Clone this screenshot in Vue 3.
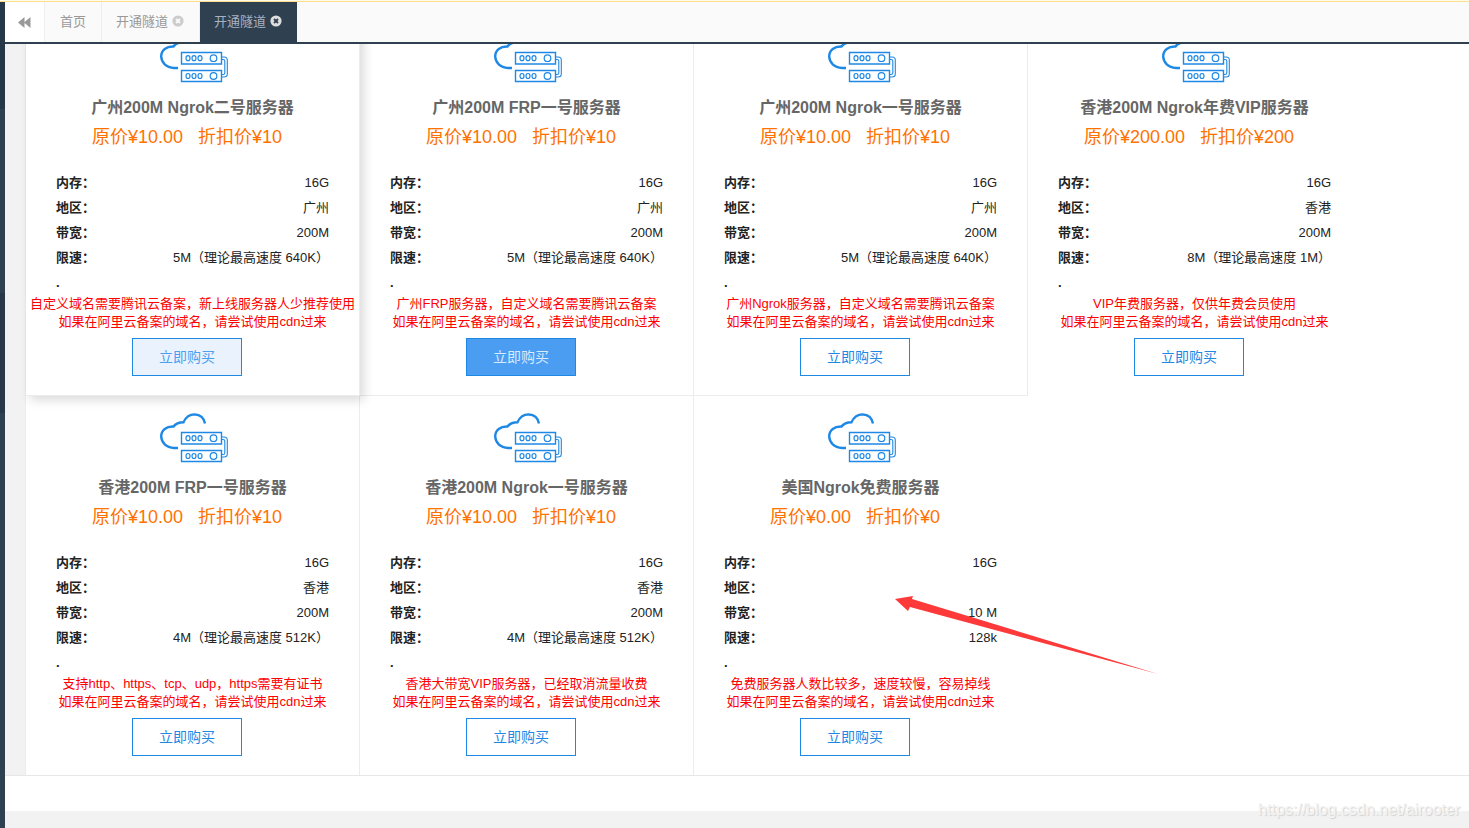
<script setup>
const specLabels = ['内存', '地区', '带宽', '限速']
const sharedNote = '如果在阿里云备案的域名，请尝试使用cdn过来'
const servers = [
  { name: '广州200M Ngrok二号服务器', price: '10.00', sale: '10', specs: ['16G', '广州', '200M', '5M（理论最高速度 640K）'], note: '自定义域名需要腾讯云备案，新上线服务器人少推荐使用', state: 'raised' },
  { name: '广州200M FRP一号服务器', price: '10.00', sale: '10', specs: ['16G', '广州', '200M', '5M（理论最高速度 640K）'], note: '广州FRP服务器，自定义域名需要腾讯云备案', state: 'pressed' },
  { name: '广州200M Ngrok一号服务器', price: '10.00', sale: '10', specs: ['16G', '广州', '200M', '5M（理论最高速度 640K）'], note: '广州Ngrok服务器，自定义域名需要腾讯云备案' },
  { name: '香港200M Ngrok年费VIP服务器', price: '200.00', sale: '200', specs: ['16G', '香港', '200M', '8M（理论最高速度 1M）'], note: 'VIP年费服务器，仅供年费会员使用', state: 'plain' },
  { name: '香港200M FRP一号服务器', price: '10.00', sale: '10', specs: ['16G', '香港', '200M', '4M（理论最高速度 512K）'], note: '支持http、https、tcp、udp，https需要有证书' },
  { name: '香港200M Ngrok一号服务器', price: '10.00', sale: '10', specs: ['16G', '香港', '200M', '4M（理论最高速度 512K）'], note: '香港大带宽VIP服务器，已经取消流量收费' },
  { name: '美国Ngrok免费服务器', price: '0.00', sale: '0', specs: ['16G', '', '10 M', '128k'], note: '免费服务器人数比较多，速度较慢，容易掉线', state: 'last' }
]
</script>

<template>
  <div class="app">
    <div class="notice"></div>
    <div class="shell">
      <aside class="side"></aside>
      <main class="main">
        <nav class="tabs">
          <button class="back" type="button" aria-label="向左滚动">
            <svg width="13" height="11" viewBox="0 0 13 11"><path d="M6.5 0v11L0 5.500zM12.500 0v11L6 5.500z" fill="#999" /></svg>
          </button>
          <a class="tab home" href="#home">首页</a>
          <a v-for="n in 2" :key="n" class="tab" :class="{ active: n === 2 }" :href="'#tunnel' + n">
            开通隧道
            <svg class="close" width="12" height="12" viewBox="0 0 12 12">
              <circle cx="6" cy="6" r="5.600" fill="currentColor" />
              <path class="cross" d="M4 4l4 4M8 4l-4 4" stroke-width="1.800" />
            </svg>
          </a>
        </nav>
        <div class="view">
          <section class="cards">
            <article v-for="s in servers" :key="s.name" class="card" :class="s.state">
              <svg class="cloud" width="71" height="50" viewBox="0 0 71 50" fill="none" stroke="#1e88e5">
                <path d="M21 35H17C9 34.500 4.500 29.500 4.200 23.500C4.200 17 9.500 13.200 16.500 13.500C19 10 22 9.200 26.500 9.200C29 4 33.500 1.400 37.500 1.400C43 1.700 47 5 48 10.500" stroke-width="2.400" />
                <path d="M24.500 19.500H64.500V31H24.500zM24.500 37.500H64.500V48.500H24.500z" stroke-width="1.400" />
                <path d="M64.500 24H67Q70.300 24 70.300 27V41Q70.300 44 67 44H64.500M64.500 26.500H66Q67.800 26.500 67.800 28V40Q67.800 41.500 66 41.500H64.500" stroke-width="1.100" />
                <g v-for="y in [25.2, 43]" :key="y" stroke-width="1.200">
                  <circle cx="56.500" :cy="y" r="3.300" />
                  <ellipse v-for="x in [31, 37, 43]" :key="x" :cx="x" :cy="y" rx="2" ry="2.500" />
                </g>
              </svg>
              <h2 class="name">{{ s.name }}</h2>
              <p class="price"><span>原价¥{{ s.price }}</span><span>折扣价¥{{ s.sale }}</span></p>
              <dl class="specs">
                <div v-for="(label, i) in specLabels" :key="label" class="spec">
                  <dt>{{ label }}：</dt>
                  <dd>{{ s.specs[i] }}</dd>
                </div>
                <div class="spec"><dt>.</dt></div>
              </dl>
              <p class="note">{{ s.note }}<br />{{ sharedNote }}</p>
              <button class="buy" type="button">立即购买</button>
            </article>
          </section>
          <div class="tail"></div>
          <svg class="arrow" width="270" height="80" viewBox="0 0 270 80">
            <path d="M5 3L23 0L22 3L268 78L20 11L18 15z" fill="#fd3a39" />
          </svg>
        </div>
      </main>
    </div>
    <div class="watermark">https://blog.csdn.net/airooter</div>
  </div>
</template>

<style>
body { margin: 0; }
</style>

<style scoped>
* { box-sizing: border-box; }
.app {
  position: relative;
  display: flex;
  flex-direction: column;
  height: 100vh;
  overflow: hidden;
  background: #f2f2f2;
  color: #222;
  font: 13px/25px "Liberation Sans", "Noto Sans CJK SC", sans-serif;
}
.notice { flex: none; height: 2px; background: #fffbe8; border-bottom: 1px solid #fbe18f; }
.shell { display: flex; flex: 1; min-height: 0; }
.side { flex: none; width: 5px; background: linear-gradient(#263847 0 107px, #2f4050 107px 291px, #283848 291px 411px, #2f4050 411px); }
.main { display: flex; flex-direction: column; flex: 1; min-width: 0; }
.tabs { display: flex; flex: none; height: 42px; background: #fafafa; border-bottom: 2px solid #2f4050; }
.back { width: 40px; padding: 0; border: 0; border-right: 1px solid #eee; background: #fff; line-height: 0; }
.tab {
  display: flex;
  align-items: center;
  gap: 4px;
  padding: 0 15px 2px 14px;
  border-right: 1px solid #eee;
  color: #999;
  text-decoration: none;
}
.home { padding: 0 15px 2px; }
.close { color: #ccc; }
.cross { stroke: #fafafa; }
.active { background: #2f4050; border-right: 0; color: #a7b1c2; }
.active .close { color: #ddd; }
.active .cross { stroke: #2f4050; }
.view { position: relative; flex: 1; min-height: 0; overflow: hidden; }
.cards {
  display: flex;
  flex-wrap: wrap;
  margin-top: -28px;
  padding-left: 21px;
  border-bottom: 1px solid #e7e7e7;
  background: linear-gradient(90deg, #f2f2f2 20px, #ececec 20px 21px, #fff 21px);
}
.card {
  display: flex;
  flex-direction: column;
  align-items: center;
  width: 334px;
  padding-top: 17px;
  padding-bottom: 19px;
  border-right: 1px solid #ececec;
  border-bottom: 1px solid #ececec;
}
.card:nth-last-child(-n + 3) { border-bottom: 0; }
.card.plain { border-color: transparent; }
.card.last { border-right-color: transparent; }
.card.raised { position: relative; box-shadow: 4px 4px 10px rgba(0, 0, 0, 0.15); }
.cloud { display: block; }
.name { margin: 10px 0 0; color: #666; font-size: 16px; line-height: 30px; white-space: nowrap; }
.price { display: flex; gap: 15px; margin: 0; padding-right: 11px; color: #ff7200; font-size: 18px; line-height: 28px; }
.specs { align-self: stretch; margin: 19px 30px 0; }
.spec { display: flex; justify-content: space-between; height: 25px; }
dt { font-weight: bold; }
dd { margin: 0; }
.note { margin: 0; color: #f00; line-height: 18px; text-align: center; white-space: nowrap; }
.buy {
  width: 110px;
  height: 38px;
  margin: 7px 11px 0 0;
  padding: 0;
  border: 1px solid #1e88e5;
  background: #fff;
  color: #1e88e5;
  font: inherit;
  font-size: 14px;
}
.raised .buy { background: #eaf3fd; color: #4b9ff1; }
.pressed .buy { background: #4b9df2; color: #d9eafc; }
.tail { height: 35px; background: #fff; }
.arrow { position: absolute; left: 885px; top: 552px; }
.watermark {
  position: absolute;
  right: 9px;
  bottom: 8px;
  color: #f4f4f4;
  font-size: 16px;
  line-height: 20px;
  text-shadow: 1px 1px 1px #d0d0d0;
}
</style>
